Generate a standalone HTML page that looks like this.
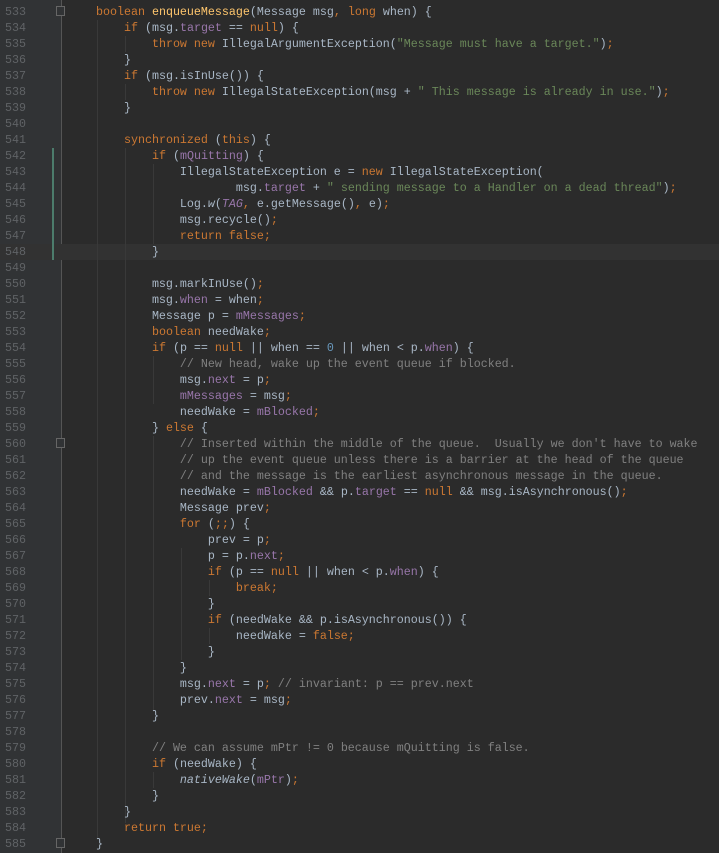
<!DOCTYPE html>
<html><head><meta charset="utf-8"><style>
html,body{margin:0;padding:0;background:#2b2b2b;width:719px;height:853px;overflow:hidden}
#g{position:absolute;left:0;top:0;width:62px;height:853px;background:#313335}
#fl{position:absolute;left:61px;top:0;width:1px;height:853px;background:#555}
.ln{position:absolute;left:0;width:26px;text-align:right;color:#606366;font:11.67px/16px "Liberation Mono",monospace}
.cl{position:absolute;left:68px;white-space:pre;color:#a9b7c6;font:11.67px/16px "Liberation Mono",monospace}
.gd{position:absolute;width:1px;background:#393939}
.k{color:#cc7832}.f{color:#9876aa}.s{color:#6a8759}.n{color:#6897bb}.c{color:#808080}.m{color:#ffc66d}.i{font-style:italic}
.fold{position:absolute;left:56px;width:9px;height:10px;background:#313335;border:1px solid #666;box-sizing:border-box}
</style></head><body>
<div id="g"></div><div id="fl"></div>
<div style="position:absolute;left:0;top:244px;width:719px;height:16px;background:#323232"></div>
<div style="position:absolute;left:52px;top:148px;width:2px;height:112px;background:#4c7c6c"></div>
<div class="gd" style="left:97px;top:20px;height:820px"></div>
<div class="gd" style="left:125px;top:36px;height:16px"></div>
<div class="gd" style="left:125px;top:84px;height:16px"></div>
<div class="gd" style="left:125px;top:148px;height:675px"></div>
<div class="gd" style="left:153px;top:164px;height:80px"></div>
<div class="gd" style="left:153px;top:356px;height:48px"></div>
<div class="gd" style="left:153px;top:436px;height:276px"></div>
<div class="gd" style="left:153px;top:772px;height:16px"></div>
<div class="gd" style="left:181px;top:548px;height:112px"></div>
<div class="gd" style="left:209px;top:580px;height:16px"></div>
<div class="gd" style="left:209px;top:628px;height:16px"></div>
<div class="fold" style="top:6px"></div>
<div class="fold" style="top:438px"></div>
<div class="fold" style="top:838px"></div>
<div id="L"></div>
<script>
var L=[
'    <span class="k">boolean</span> <span class="m">enqueueMessage</span>(Message msg<span class="k">,</span> <span class="k">long</span> when) {',
'        <span class="k">if</span> (msg.<span class="f">target</span> == <span class="k">null</span>) {',
'            <span class="k">throw new</span> IllegalArgumentException(<span class="s">"Message must have a target."</span>)<span class="k">;</span>',
'        }',
'        <span class="k">if</span> (msg.isInUse()) {',
'            <span class="k">throw new</span> IllegalStateException(msg + <span class="s">" This message is already in use."</span>)<span class="k">;</span>',
'        }',
'',
'        <span class="k">synchronized</span> (<span class="k">this</span>) {',
'            <span class="k">if</span> (<span class="f">mQuitting</span>) {',
'                IllegalStateException e = <span class="k">new</span> IllegalStateException(',
'                        msg.<span class="f">target</span> + <span class="s">" sending message to a Handler on a dead thread"</span>)<span class="k">;</span>',
'                Log.<span class="i">w</span>(<span class="f i">TAG</span><span class="k">,</span> e.getMessage()<span class="k">,</span> e)<span class="k">;</span>',
'                msg.recycle()<span class="k">;</span>',
'                <span class="k">return false;</span>',
'            }',
'',
'            msg.markInUse()<span class="k">;</span>',
'            msg.<span class="f">when</span> = when<span class="k">;</span>',
'            Message p = <span class="f">mMessages</span><span class="k">;</span>',
'            <span class="k">boolean</span> needWake<span class="k">;</span>',
'            <span class="k">if</span> (p == <span class="k">null</span> || when == <span class="n">0</span> || when &lt; p.<span class="f">when</span>) {',
'                <span class="c">// New head, wake up the event queue if blocked.</span>',
'                msg.<span class="f">next</span> = p<span class="k">;</span>',
'                <span class="f">mMessages</span> = msg<span class="k">;</span>',
'                needWake = <span class="f">mBlocked</span><span class="k">;</span>',
'            } <span class="k">else</span> {',
'                <span class="c">// Inserted within the middle of the queue.  Usually we don\'t have to wake</span>',
'                <span class="c">// up the event queue unless there is a barrier at the head of the queue</span>',
'                <span class="c">// and the message is the earliest asynchronous message in the queue.</span>',
'                needWake = <span class="f">mBlocked</span> &amp;&amp; p.<span class="f">target</span> == <span class="k">null</span> &amp;&amp; msg.isAsynchronous()<span class="k">;</span>',
'                Message prev<span class="k">;</span>',
'                <span class="k">for</span> (<span class="k">;;</span>) {',
'                    prev = p<span class="k">;</span>',
'                    p = p.<span class="f">next</span><span class="k">;</span>',
'                    <span class="k">if</span> (p == <span class="k">null</span> || when &lt; p.<span class="f">when</span>) {',
'                        <span class="k">break;</span>',
'                    }',
'                    <span class="k">if</span> (needWake &amp;&amp; p.isAsynchronous()) {',
'                        needWake = <span class="k">false;</span>',
'                    }',
'                }',
'                msg.<span class="f">next</span> = p<span class="k">;</span> <span class="c">// invariant: p == prev.next</span>',
'                prev.<span class="f">next</span> = msg<span class="k">;</span>',
'            }',
'',
'            <span class="c">// We can assume mPtr != 0 because mQuitting is false.</span>',
'            <span class="k">if</span> (needWake) {',
'                <span class="i">nativeWake</span>(<span class="f">mPtr</span>)<span class="k">;</span>',
'            }',
'        }',
'        <span class="k">return true;</span>',
'    }'];
var h='';
for(var j=0;j<L.length;j++){var t=4+j*16;
h+='<div class="ln" style="top:'+t+'px">'+(533+j)+'</div><div class="cl" style="top:'+t+'px">'+(L[j]||' ')+'</div>';}
document.getElementById('L').innerHTML=h;
</script>
</body></html>
